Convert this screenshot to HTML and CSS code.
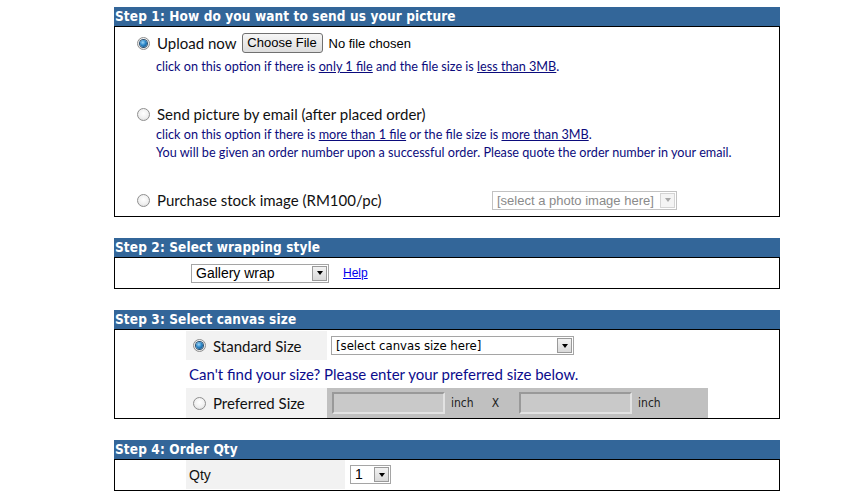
FILE: index.html
```html
<!DOCTYPE html>
<html lang="en">
<head>
  <meta charset="UTF-8">
  <title>Canvas Print Order</title>
  <link rel="stylesheet" href="styles.css">
</head>
<body>
  <div class="order-form">

    <div class="step">
      <div class="step-title">Step 1: How do you want to send us your picture</div>
      <div class="step-body step-send">
        <div class="opt-row">
          <input type="radio" name="source" checked>
          <span class="opt-text">Upload now</span>
          <span class="file-btn">Choose File</span>
          <span class="file-name">No file chosen</span>
        </div>
        <p class="note">click on this option if there is <a href="#">only 1 file</a> and the file size is <a href="#">less than 3MB</a>.</p>

        <div class="opt-row opt-gap">
          <input type="radio" name="source">
          <span class="opt-text">Send picture by email (after placed order)</span>
        </div>
        <p class="note note-tight">click on this option if there is <a href="#">more than 1 file</a> or the file size is <a href="#">more than 3MB</a>.<br>
        You will be given an order number upon a successful order. Please quote the order number in your email.</p>

        <div class="opt-row opt-gap">
          <input type="radio" name="source">
          <span class="opt-text opt-fixed">Purchase stock image (RM100/pc)</span>
          <span class="select select-off select-photo">
            <span class="select-val">[select a photo image here]</span>
            <span class="select-btn"></span>
          </span>
        </div>
      </div>
    </div>

    <div class="step">
      <div class="step-title">Step 2: Select wrapping style</div>
      <div class="step-body step-wrap">
        <span class="select select-wrap">
          <span class="select-val">Gallery wrap</span>
          <span class="select-btn"></span>
        </span>
        <a href="#" class="help-link">Help</a>
      </div>
    </div>

    <div class="step">
      <div class="step-title">Step 3: Select canvas size</div>
      <div class="step-body">
        <div class="size-grid">
          <div class="size-label">
            <input type="radio" name="size" checked>
            <span class="opt-text">Standard Size</span>
          </div>
          <div class="size-field">
            <span class="select select-canvas">
              <span class="select-val">[select canvas size here]</span>
              <span class="select-btn"></span>
            </span>
          </div>
          <div class="size-hint">Can't find your size? Please enter your preferred size below.</div>
          <div class="size-label size-last">
            <input type="radio" name="size">
            <span class="opt-text">Preferred Size</span>
          </div>
          <div class="size-custom">
            <span class="size-input"></span>
            <span class="unit">inch</span>
            <span class="unit-x">X</span>
            <span class="size-input"></span>
            <span class="unit">inch</span>
          </div>
        </div>
      </div>
    </div>

    <div class="step">
      <div class="step-title">Step 4: Order Qty</div>
      <div class="step-body">
        <div class="qty-row">
          <div class="qty-label">Qty</div>
          <div class="qty-field">
            <span class="select select-qty">
              <span class="select-val">1</span>
              <span class="select-btn"></span>
            </span>
          </div>
        </div>
      </div>
    </div>

  </div>
</body>
</html>
```

FILE: styles.css
```css
body {
  margin: 0;
  background-color: white;
  font-family: Lato, "Open Sans", sans-serif;
  color: #111;
}

.order-form {
  width: 666px;
  margin-left: 114px;
  padding-top: 7px;
}

.step {
  margin-bottom: 21px;
}

.step-title {
  height: 19px;
  line-height: 19px;
  padding-left: 1px;
  background-color: #336699;
  color: white;
  font-family: "DejaVu Sans Condensed", "DejaVu Sans", sans-serif;
  font-size: 13.5px;
  letter-spacing: 0.12px;
  font-weight: bold;
}

.step-body {
  border: 1px solid #000;
}

/* step 1 */
.step-send {
  padding: 6px 0 6px 22px;
}

.opt-row {
  display: flex;
  align-items: center;
  height: 20px;
}

.opt-gap {
  margin-top: 28px;
}

input[type="radio"] {
  appearance: none;
  -webkit-appearance: none;
  width: 13px;
  height: 13px;
  margin: 0 7px 0 0;
  border: 1px solid #8f8f8f;
  border-radius: 50%;
  background: radial-gradient(circle at 50% 40%, #ffffff 0%, #f0f0f0 55%, #d4d4d4 100%);
  display: flex;
  align-items: center;
  justify-content: center;
  flex-shrink: 0;
}

input[type="radio"]:checked::after {
  content: "";
  width: 7px;
  height: 7px;
  border-radius: 50%;
  background: radial-gradient(circle at 40% 35%, #9fd6f7 0%, #2a86c8 45%, #0d3f6e 100%);
  box-shadow: 0 0 0 1px #2a4f6f;
}

.opt-text {
  font-size: 15px;
  color: #111;
  white-space: nowrap;
}

.opt-fixed {
  width: 335px;
}

.file-btn {
  margin-left: 5px;
  height: 20px;
  width: 81px;
  box-sizing: border-box;
  border: 1px solid #707070;
  border-radius: 3px;
  background: linear-gradient(#f6f6f6, #dddddd);
  font-family: "Liberation Sans", Arial, sans-serif;
  font-size: 13px;
  line-height: 18px;
  text-align: center;
  color: #000;
}

.file-name {
  margin-left: 6px;
  font-family: "Liberation Sans", Arial, sans-serif;
  font-size: 13px;
  color: #000;
}

.note {
  margin: 5px 0 0 19px;
  font-size: 12.65px;
  line-height: 18px;
  color: #0b0b7c;
}

.note-tight {
  margin-top: 2px;
}

.note a {
  color: #0b0b7c;
}

/* dropdown boxes */
.select {
  display: inline-flex;
  align-items: stretch;
  height: 19px;
  box-sizing: border-box;
  border: 1px solid #a5a5a5;
  background-color: white;
  font-family: "Liberation Sans", Arial, sans-serif;
  font-size: 14px;
  color: #000;
}

.select-val {
  flex: 1;
  padding-left: 4px;
  line-height: 17px;
  white-space: nowrap;
  overflow: hidden;
}

.select-btn {
  width: 15px;
  margin: 1px;
  box-sizing: border-box;
  border: 1px solid #9a9a9a;
  background: linear-gradient(#f2f2f2, #d9d9d9);
  display: flex;
  align-items: center;
  justify-content: center;
}

.select-btn::after {
  content: "";
  width: 0;
  height: 0;
  border-left: 3px solid transparent;
  border-right: 3px solid transparent;
  border-top: 4px solid #000;
}

.select-off {
  border-color: #c2c2c2;
  color: #8a8a8a;
}

.select-off .select-btn {
  border-color: #d4d4d4;
  background: #f4f4f4;
}

.select-off .select-btn::after {
  border-top-color: #a8a8a8;
}

.select-photo {
  width: 185px;
  font-size: 13px;
}

/* step 2 */
.step-wrap {
  display: flex;
  align-items: center;
  height: 30px;
  padding-left: 76px;
}

.select-wrap {
  width: 138px;
}

.help-link {
  margin-left: 14px;
  font-family: "Liberation Sans", Arial, sans-serif;
  font-size: 12px;
  color: #0000ee;
}

/* step 3 */
.size-grid {
  display: grid;
  grid-template-columns: 141px 381px;
  grid-template-rows: 29px 28px 30px;
  margin: 1px 0 0 71px;
}

.size-label {
  display: flex;
  align-items: center;
  padding-left: 7px;
  background-color: #f2f2f2;
}

.size-field {
  display: flex;
  align-items: center;
  padding-left: 4px;
}

.select-canvas {
  width: 243px;
  font-family: "DejaVu Sans Condensed", "DejaVu Sans", sans-serif;
  font-size: 13px;
}

.size-hint {
  grid-column: 1 / 3;
  display: flex;
  align-items: center;
  padding-left: 3px;
  font-size: 15px;
  color: #0b0b8c;
}

.size-custom {
  display: flex;
  align-items: center;
  padding-left: 5px;
  background-color: #c0c0c0;
  font-family: "DejaVu Sans Condensed", "DejaVu Sans", sans-serif;
  font-size: 12px;
  color: #222;
}

.size-input {
  width: 113px;
  height: 22px;
  box-sizing: border-box;
  border: 2px solid;
  border-color: #999999 #e2e2e2 #e2e2e2 #999999;
  background-color: #c9c9c9;
}

.unit {
  margin-left: 6px;
}

.unit-x {
  margin: 0 20px 0 18px;
}

/* step 4 */
.qty-row {
  display: grid;
  grid-template-columns: 159px auto;
  height: 29px;
  margin: 0 0 1px 71px;
}

.qty-label {
  display: flex;
  align-items: center;
  padding-left: 3px;
  background-color: #f2f2f2;
  font-family: "Liberation Sans", Arial, sans-serif;
  font-size: 14px;
}

.qty-field {
  display: flex;
  align-items: center;
  padding-left: 5px;
}

.select-qty {
  width: 41px;
}
```
